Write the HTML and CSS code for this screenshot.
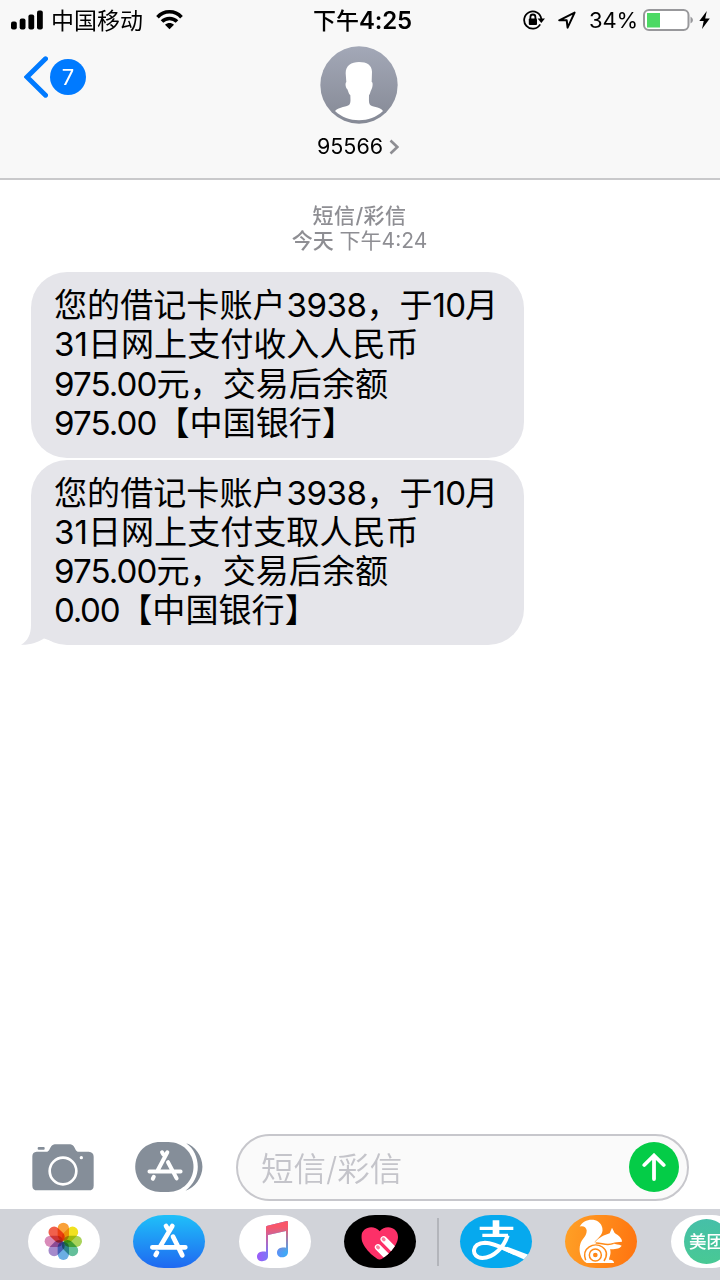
FILE: index.html
```html
<!DOCTYPE html>
<html lang="zh-CN">
<head>
  <meta charset="UTF-8" />
  <title>95566</title>
  <link rel="stylesheet" href="styles.css">
</head>
<body>
  <div class="screen">
    <header class="header">
      <div class="status">
        <svg class="signal" viewBox="0 0 32 20">
          <rect x="0" y="11.5" width="5.8" height="8" rx="2" />
          <rect x="8.7" y="8.5" width="5.8" height="11" rx="2" />
          <rect x="17.4" y="4.5" width="5.8" height="15" rx="2" />
          <rect x="26" y="0.5" width="5.8" height="19" rx="2" />
        </svg>
        <span class="carrier">中国移动</span>
        <svg class="wifi" viewBox="0 0 27 20">
          <path d="M1.5 7.2 C8 0 19 0 25.5 7.2" />
          <path d="M6 11.6 C10 7.4 17 7.4 21 11.6" />
          <path class="dot" d="M9 14.8 C11.5 12.5 15.5 12.5 18 14.8 L13.5 19.3 Z" />
        </svg>
        <span class="time">下午<b>4:25</b></span>
        <svg class="lock" viewBox="0 0 22 20">
          <path d="M17.2 14.4 A8.6 8.6 0 1 1 18.3 9" />
          <path class="fill" d="M14.6 8.4 H22 L18.3 13 Z" />
          <rect class="fill" x="5.8" y="8.5" width="8.2" height="6.5" rx="1" />
          <path d="M7.4 9 V7 a2.5 2.5 0 0 1 5 0 V9" />
        </svg>
        <svg class="location" viewBox="0 0 18 18">
          <path d="M1.2 9.3 L16.6 1.6 L9.6 16.6 L8.7 9.3 Z" />
        </svg>
        <span class="percent">34%</span>
        <svg class="battery" viewBox="0 0 50 22">
          <rect class="case" x="1" y="1" width="44.5" height="20" rx="5" />
          <rect class="level" x="4" y="4" width="13" height="14.5" />
          <path class="cap" d="M47.5 7.5 Q50 9 50 11 Q50 13 47.5 14.5 Z" />
        </svg>
        <svg class="bolt" viewBox="0 0 11 18">
          <path d="M7.8 0 L0.3 10 H4.7 L3 18 L10.8 7.4 H6.2 Z" />
        </svg>
      </div>

      <div class="nav">
        <div class="back">
          <svg class="chevron" viewBox="0 0 24 42">
            <path d="M21.5 2.8 L3 21 L21.5 39.2" />
          </svg>
          <span class="badge">7</span>
        </div>
        <div class="contact">
          <svg class="avatar" viewBox="0 0 234 234">
            <defs>
              <linearGradient id="avatarBg" x1="0" y1="0" x2="0" y2="1">
                <stop offset="0" stop-color="#a3a8b7" />
                <stop offset="1" stop-color="#858995" />
              </linearGradient>
            </defs>
            <circle cx="117" cy="117" r="116" fill="url(#avatarBg)" />
            <path fill="#fff" d="M117 48 C141 48 155 57 156 77 L155 108 C160 109 158 125 154 131 C151 135 151 143 147 148 C147 159 146 168 149 175 C154 185 178 180 189 195 C150 232 84 232 45 195 C57 181 82 185 89 175 C93 168 91 158 91 148 C85 143 85 136 82 130 C76 124 75 110 79 108 L77 82 C77 58 94 48 117 48 Z" />
          </svg>
          <div class="name">95566
            <svg class="more" viewBox="0 0 10 16"><path d="M1.5 1.5 L8.3 8 L1.5 14.5" /></svg>
          </div>
        </div>
      </div>
    </header>

    <main class="chat">
      <div class="stamp">
        <div class="kind">短信/彩信</div>
        <div><b>今天</b> 下午4:24</div>
      </div>
      <div class="bubble">
        您的借记卡账户<span class="num card">3938</span>，于<span class="num">10</span>月<br>
        <span class="num day">31</span>日网上支付收入人民币<br>
        <span class="num">975.00</span>元，交易后余额<br>
        <span class="num">975.00</span>【中国银行】
      </div>
      <div class="bubble last">
        您的借记卡账户<span class="num card">3938</span>，于<span class="num">10</span>月<br>
        <span class="num day">31</span>日网上支付支取人民币<br>
        <span class="num">975.00</span>元，交易后余额<br>
        <span class="num zero">0.00</span>【中国银行】
        <svg class="tail" viewBox="0 0 34 50">
          <path d="M10 0 V30 C10 39 7 46 0 49.8 C10 50 17 47 23 43.5 L34 47 V0 Z" />
        </svg>
      </div>
    </main>

    <div class="compose">
      <svg class="camera" viewBox="0 0 186 141">
        <path class="body" d="M14 23 H46 C55 21 54 2 68 1 H115 C129 2 128 21 137 23 H170 Q185 24 185 38 V125 Q185 139 170 139 H16 Q1 139 1 125 V37 Q1 24 14 23 Z" />
        <rect class="body" x="17" y="9" width="21" height="8" rx="3" />
        <circle class="lens" cx="93" cy="81" r="40" />
        <circle class="light" cx="148" cy="41" r="5" />
      </svg>
      <svg class="drawer" viewBox="0 0 204 151">
        <path class="body" d="M76 0 H100 C143 0 176 33 176 75 S143 151 100 151 H76 C32 151 0 118 0 75 S32 0 76 0 Z" />
        <path class="body" d="M154 4 C180 12 203 43 203 75 S180 139 152 147 C176 128 189 103 189 75 S177 20 154 4 Z" />
        <path class="letter" d="M97 31 L66 89 M43 89 H137 M81 31 L85 38 M99 61 L125 110 M56 105 L53 111" />
      </svg>
      <div class="field">
        <span class="placeholder">短信/彩信</span>
        <span class="send">
          <svg viewBox="0 0 24 28"><path d="M12 26 V3 M2.3 12 L12 2.5 L21.7 12" /></svg>
        </span>
      </div>
    </div>

    <footer class="apps">
      <div class="app white">
        <svg viewBox="0 0 216 159">
          <g class="petals" transform="translate(106 79)">
            <rect x="-17" y="-56" width="34" height="55" rx="17" fill="#f9a13a" />
            <rect x="-17" y="-56" width="34" height="55" rx="17" fill="#f1e11f" transform="rotate(45)" />
            <rect x="-17" y="-56" width="34" height="55" rx="17" fill="#a9d35a" transform="rotate(90)" />
            <rect x="-17" y="-56" width="34" height="55" rx="17" fill="#64bf9a" transform="rotate(135)" />
            <rect x="-17" y="-56" width="34" height="55" rx="17" fill="#6caee4" transform="rotate(180)" />
            <rect x="-17" y="-56" width="34" height="55" rx="17" fill="#a58acb" transform="rotate(225)" />
            <rect x="-17" y="-56" width="34" height="55" rx="17" fill="#d98bb9" transform="rotate(270)" />
            <rect x="-17" y="-56" width="34" height="55" rx="17" fill="#f1604c" transform="rotate(315)" />
          </g>
        </svg>
      </div>
      <div class="app store">
        <svg viewBox="0 0 216 159">
          <path class="letter" d="M118 33 L80 97 M58 97 H157 M99 33 L104 41 M120 65 L148 121 M72 113 L68 120" />
        </svg>
      </div>
      <div class="app white">
        <svg viewBox="0 0 216 159">
          <defs>
            <linearGradient id="noteBase" gradientUnits="userSpaceOnUse" x1="60" y1="0" x2="140" y2="0">
              <stop offset="0" stop-color="#985ff8" />
              <stop offset="1" stop-color="#3fa9f6" />
            </linearGradient>
            <linearGradient id="noteTop" gradientUnits="userSpaceOnUse" x1="0" y1="35" x2="0" y2="112">
              <stop offset="0" stop-color="#f9566a" />
              <stop offset="1" stop-color="#f9566a" stop-opacity="0" />
            </linearGradient>
            <path id="note" d="M81 37 Q81 33 85 32 L143 18 Q147 17 147 21 V111 C147 132 114 132 114 113 C114 98 130 96 141 98 V48 L87 60 V124 C87 143 54 144 54 125 C54 110 70 108 81 110 Z" />
          </defs>
          <use href="#note" fill="url(#noteBase)" />
          <use href="#note" fill="url(#noteTop)" />
        </svg>
      </div>
      <div class="app touch">
        <svg viewBox="0 0 216 159">
          <defs>
            <clipPath id="heart">
              <path d="M107 134 C98 134 52 98 52 66 C52 35 90 27 107 49 C124 27 162 35 162 66 C162 98 116 134 107 134 Z" />
            </clipPath>
          </defs>
          <g clip-path="url(#heart)">
            <rect width="216" height="159" fill="#fc3068" />
            <path class="finger" d="M119 73 L156 110 M102 97 L139 134" />
            <path class="nail" d="M118 72 L120 74 M101 96 L103 98" />
          </g>
        </svg>
      </div>
      <div class="divider"></div>
      <div class="app alipay">
        <svg viewBox="0 0 216 159">
          <path class="mark" d="M59 40 H160 M67 61 H144" />
          <path class="mark stem" d="M108 16 V61" />
          <path class="mark bend" d="M143 61 C132 96 101 129 67 129 C31 127 34 83 75 83 C104 84 137 103 166 115" />
          <path fill="#fff" d="M141 95 L205 119 L196 135 L129 105 Z" />
        </svg>
      </div>
      <div class="app uc">
        <svg viewBox="0 0 216 159">
          <path fill="#fff" d="M44 35 C57 8 105 5 112 39 C117 62 92 72 88 83 C98 74 105 64 134 55 L141 38 L149 54 C160 61 171 69 171 80 C160 82 150 80 143 85 C154 90 160 87 170 92 C162 104 148 101 135 103 C140 116 132 128 132 134 C143 134 147 138 147 144 H65 C46 134 40 106 46 87 C50 72 66 64 65 46 C64 36 53 31 44 35 Z" />
          <path class="ring" d="M62 136 C48 98 88 80 112 96 C132 110 124 127 117 138" />
          <circle class="ring" cx="91" cy="120" r="18" />
          <circle cx="91" cy="120" r="7" fill="#ff8717" />
          <path class="ring" d="M92 84 C110 83 125 94 146 85" />
        </svg>
      </div>
      <div class="app white meituan"><span>美团</span></div>
    </footer>
  </div>
</body>
</html>
```
FILE: styles.css
```css
body {
  margin: 0;
  overflow: hidden;
  background: #fff;
  font-family: Inter, "Noto Sans CJK SC", sans-serif;
  color: #000;
}
svg {
  display: block;
  flex: none;
}
.screen {
  width: 720px;
  height: 1280px;
  overflow: hidden;
  display: flex;
  flex-direction: column;
}

/* header */
.header {
  height: 178px;
  flex: none;
  background: #f8f8f8;
  border-bottom: 2px solid #c9c9cb;
}
.status {
  display: flex;
  align-items: center;
  height: 39px;
  padding-left: 11px;
  white-space: nowrap;
}
.signal {
  width: 32px;
  height: 20px;
}
.carrier {
  width: 93px;
  margin-left: 8px;
  padding-bottom: 2px;
  font-size: 23px;
}
.wifi {
  width: 27px;
  height: 20px;
  margin-left: 12px;
  fill: none;
  stroke: #000;
  stroke-width: 3.6;
}
.wifi .dot {
  fill: #000;
  stroke: none;
}
.time {
  width: 99px;
  margin-left: 130px;
  padding-bottom: 2px;
  font-size: 23px;
  font-weight: 500;
}
.time b {
  font-size: 24px;
  font-weight: 600;
  letter-spacing: -0.2px;
}
.lock {
  width: 22px;
  height: 20px;
  margin-left: 111px;
  fill: none;
  stroke: #000;
  stroke-width: 1.8;
}
.lock .fill {
  fill: #000;
  stroke: none;
}
.location {
  width: 18px;
  height: 18px;
  margin-left: 13px;
  fill: none;
  stroke: #000;
  stroke-width: 2;
  stroke-linejoin: round;
}
.percent {
  width: 48px;
  margin-left: 13px;
  font-size: 22px;
  letter-spacing: -0.2px;
}
.battery {
  width: 50px;
  height: 22px;
  margin-left: 6px;
}
.battery .case {
  fill: #fff;
  stroke: #98989b;
  stroke-width: 2;
}
.battery .level {
  fill: #4cd964;
}
.battery .cap {
  fill: #98989b;
}
.bolt {
  width: 11px;
  height: 18px;
  margin-left: 6px;
}
.nav {
  display: grid;
  grid-template-columns: 1fr auto 1fr;
  padding: 7px 1px 0 0;
}
.back {
  display: flex;
  align-items: center;
  height: 42px;
  padding: 10px 0 0 24px;
}
.chevron {
  width: 24px;
  height: 42px;
  fill: none;
  stroke: #007aff;
  stroke-width: 5;
  stroke-linecap: round;
}
.badge {
  width: 36px;
  height: 36px;
  margin-left: 2px;
  border-radius: 50%;
  background: #007aff;
  color: #fff;
  font-size: 22px;
  line-height: 36px;
  text-align: center;
}
.contact {
  display: flex;
  flex-direction: column;
  align-items: center;
}
.avatar {
  width: 78px;
  height: 78px;
}
.name {
  display: flex;
  align-items: center;
  gap: 6px;
  margin: 8px 3px 0 0;
  font-size: 21.5px;
  line-height: 28px;
}
.more {
  width: 10px;
  height: 16px;
  margin-top: 2px;
  fill: none;
  stroke: #8e8e93;
  stroke-width: 2.6;
}

/* messages */
.chat {
  flex: 1;
  padding: 23px 32px 0 31px;
}
.stamp {
  margin-bottom: 19px;
  text-align: center;
  font-size: 21px;
  line-height: 25px;
  color: #8e8e93;
}
.stamp .kind, .stamp b {
  font-weight: 500;
}
.stamp .kind {
  letter-spacing: 0.4px;
}
.bubble {
  position: relative;
  box-sizing: border-box;
  width: 493px;
  height: 185.5px;
  margin-bottom: 2px;
  padding: 14px 0 0 23px;
  border-radius: 36px;
  background: #e5e5ea;
  font-size: 33.1px;
  line-height: 39.3px;
  white-space: nowrap;
}
.num {
  letter-spacing: -0.9px;
}
.num.card {
  margin-left: 1px;
  letter-spacing: -0.5px;
}
.num.day {
  letter-spacing: 0;
}
.num.zero {
  letter-spacing: -1.3px;
}
.tail {
  position: absolute;
  left: -10px;
  bottom: 0;
  width: 34px;
  height: 50px;
  fill: #e5e5ea;
}

/* input row */
.compose {
  display: flex;
  align-items: center;
  height: 83px;
  padding: 2px 0 0 32px;
}
.camera {
  width: 62px;
  height: 47px;
}
.camera .body, .drawer .body {
  fill: #858e99;
}
.camera .lens {
  fill: none;
  stroke: #fff;
  stroke-width: 8;
}
.camera .light {
  fill: #fff;
}
.drawer {
  width: 68px;
  height: 50px;
  margin: 0 0 1px 41px;
}
.letter {
  fill: none;
  stroke: #fff;
  stroke-width: 12;
  stroke-linecap: round;
}
.field {
  display: flex;
  align-items: center;
  justify-content: space-between;
  box-sizing: border-box;
  width: 453px;
  height: 67px;
  margin-left: 33px;
  padding: 0 8px 0 23px;
  border: 2px solid #c7c7cc;
  border-radius: 34px;
  background: #fafafa;
}
.placeholder {
  padding-bottom: 3px;
  font-size: 32.5px;
  font-weight: 350;
  color: #c4c4ca;
}
.send {
  display: flex;
  align-items: center;
  justify-content: center;
  width: 50px;
  height: 50px;
  margin-bottom: 1px;
  border-radius: 50%;
  background: #04cc47;
}
.send svg {
  width: 24px;
  height: 28px;
  fill: none;
  stroke: #fff;
  stroke-width: 3.8;
  stroke-linecap: round;
}

/* app strip */
.apps {
  display: flex;
  height: 65px;
  padding: 6px 0 0 27.5px;
  background: #d1d3d9;
}
.app {
  flex: none;
  width: 72px;
  height: 53px;
  margin-right: 33.5px;
  border-radius: 31px / 26.5px;
  overflow: hidden;
}
.app svg {
  width: 72px;
  height: 53px;
}
.white {
  background: #fff;
}
.petals rect {
  mix-blend-mode: multiply;
}
.store {
  background: linear-gradient(#1fc0f9, #1f68f1);
}
.store .letter {
  stroke-width: 14;
}
.touch {
  margin-right: 21px;
  background: #000;
}
.finger {
  fill: none;
  stroke: #fff;
  stroke-width: 19;
  stroke-linecap: round;
}
.nail {
  fill: none;
  stroke: #fc7d9f;
  stroke-width: 10;
  stroke-linecap: round;
}
.divider {
  flex: none;
  width: 2px;
  height: 48px;
  margin: 3px 20.5px 0 0;
  background: #b3b5bb;
}
.alipay {
  background: #06a9ee;
}
.mark {
  fill: none;
  stroke: #fff;
  stroke-width: 10;
}
.mark.stem {
  stroke-width: 20;
}
.mark.bend {
  stroke-width: 12;
}
.uc {
  background: linear-gradient(100deg, #ffa126, #ff730f);
}
.ring {
  fill: none;
  stroke: #ff8b19;
  stroke-width: 4.5;
}
.meituan {
  display: flex;
  align-items: center;
  justify-content: center;
}
.meituan span {
  flex: none;
  width: 45px;
  height: 45px;
  border-radius: 50%;
  background: linear-gradient(#46bfa8, #48c994);
  color: #fff;
  font-size: 17.5px;
  font-weight: 500;
  line-height: 46px;
  text-align: center;
}
```
